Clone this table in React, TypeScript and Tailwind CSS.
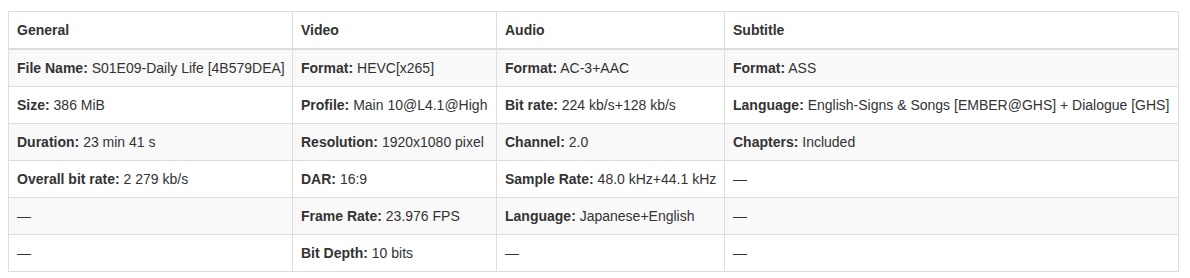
import React from 'react';

type Cell = { label: string; value: string } | null;

const columns = ['General', 'Video', 'Audio', 'Subtitle'];

const rows: Cell[][] = [
  [
    { label: 'File Name', value: 'S01E09-Daily Life [4B579DEA]' },
    { label: 'Format', value: 'HEVC[x265]' },
    { label: 'Format', value: 'AC-3+AAC' },
    { label: 'Format', value: 'ASS' },
  ],
  [
    { label: 'Size', value: '386 MiB' },
    { label: 'Profile', value: 'Main 10@L4.1@High' },
    { label: 'Bit rate', value: '224 kb/s+128 kb/s' },
    { label: 'Language', value: 'English-Signs & Songs [EMBER@GHS] + Dialogue [GHS]' },
  ],
  [
    { label: 'Duration', value: '23 min 41 s' },
    { label: 'Resolution', value: '1920x1080 pixel' },
    { label: 'Channel', value: '2.0' },
    { label: 'Chapters', value: 'Included' },
  ],
  [
    { label: 'Overall bit rate', value: '2 279 kb/s' },
    { label: 'DAR', value: '16:9' },
    { label: 'Sample Rate', value: '48.0 kHz+44.1 kHz' },
    null,
  ],
  [
    null,
    { label: 'Frame Rate', value: '23.976 FPS' },
    { label: 'Language', value: 'Japanese+English' },
    null,
  ],
  [null, { label: 'Bit Depth', value: '10 bits' }, null, null],
];

const App: React.FC = () => {
  return (
    <div className="bg-white px-2 pt-[11px] pb-2 font-['Liberation_Sans',Arial,sans-serif] text-[14px] leading-[20px] text-[#333]">
      <table className="w-[1170px] table-fixed border-collapse border border-[#ddd]">
        <colgroup>
          <col className="w-[284px]" />
          <col className="w-[204px]" />
          <col className="w-[228px]" />
          <col className="w-[454px]" />
        </colgroup>
        <thead>
          <tr>
            {columns.map((c) => (
              <th key={c} className="border border-[#ddd] border-b-2 p-2 text-left font-bold">
                {c}
              </th>
            ))}
          </tr>
        </thead>
        <tbody>
          {rows.map((row, i) => (
            <tr key={i} className={i % 2 === 0 ? 'bg-[#f9f9f9]' : 'bg-white'}>
              {row.map((cell, j) => (
                <td key={j} className="border border-[#ddd] p-2 whitespace-nowrap">
                  {cell ? (
                    <>
                      <b>{cell.label}:</b> {cell.value}
                    </>
                  ) : (
                    '—'
                  )}
                </td>
              ))}
            </tr>
          ))}
        </tbody>
      </table>
    </div>
  );
};

export default App;
